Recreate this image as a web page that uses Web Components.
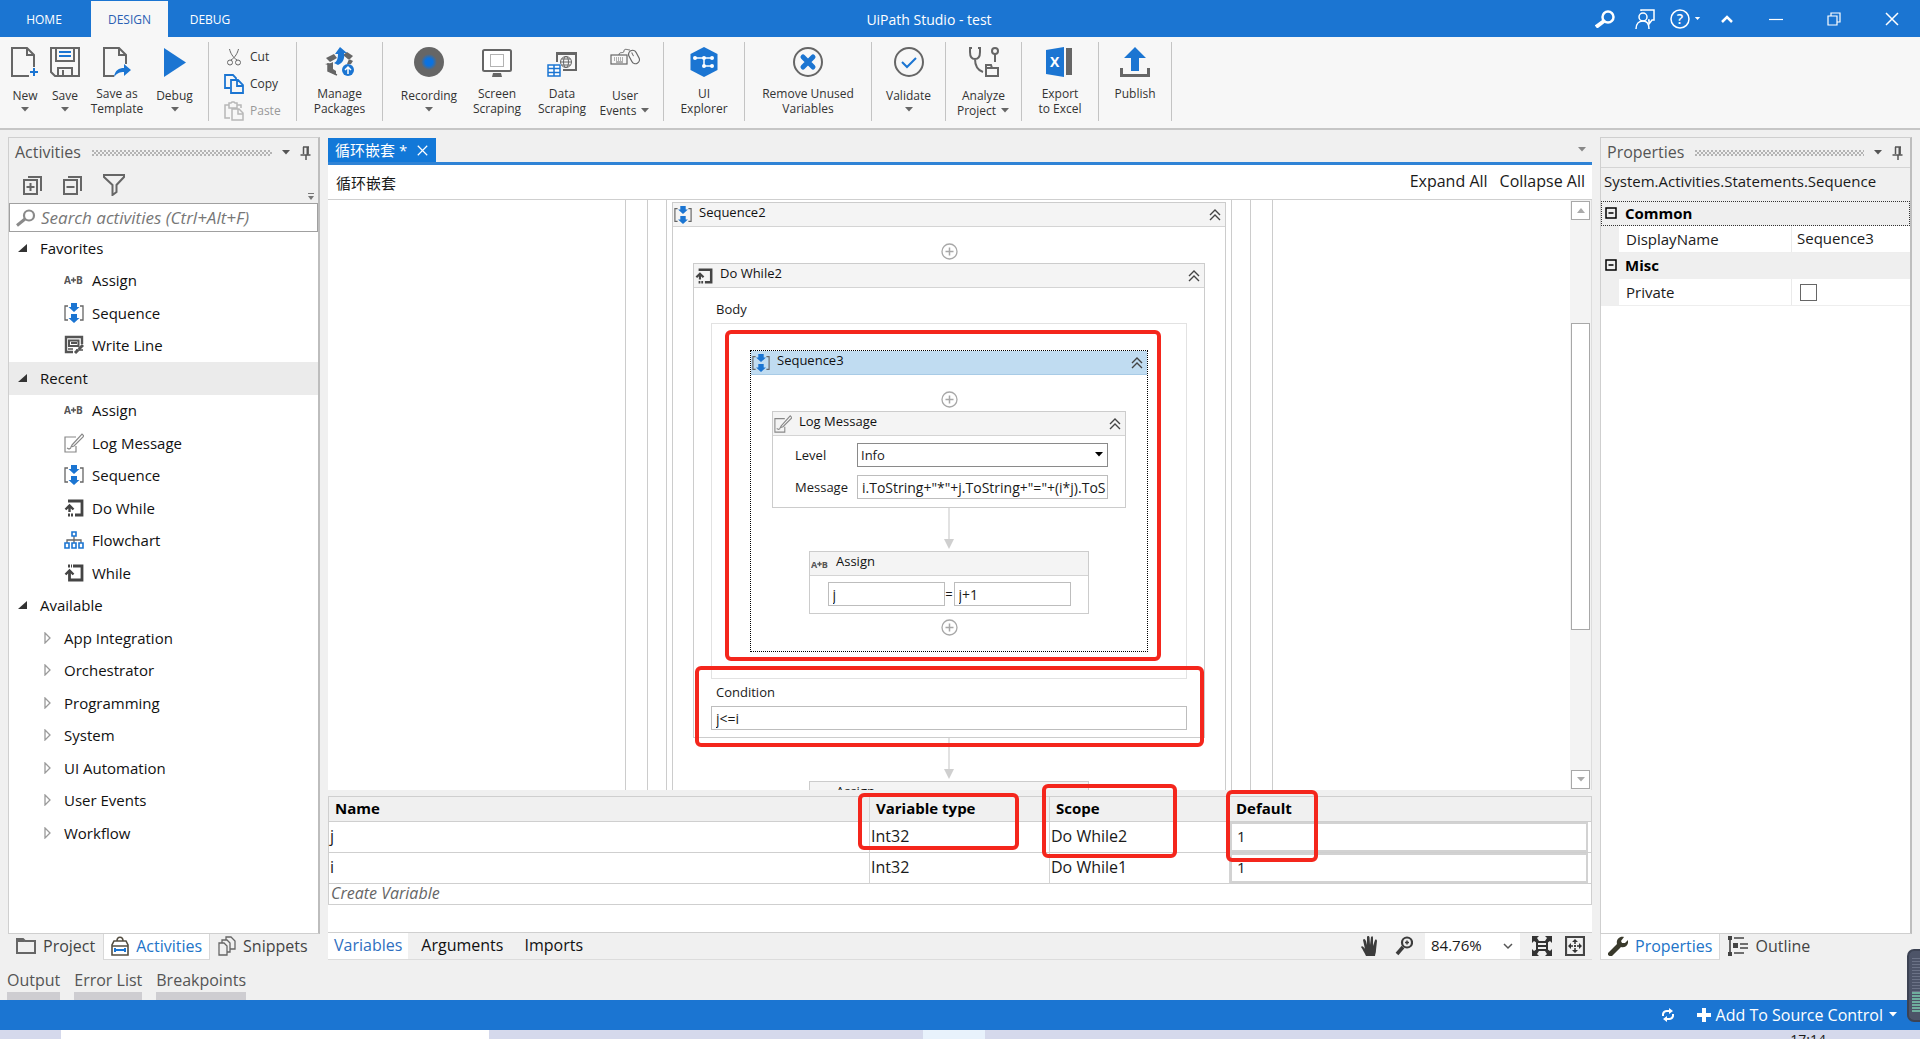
<!DOCTYPE html>
<html lang="en">
<head>
<meta charset="utf-8">
<title>UiPath Studio - test</title>
<style>
  html, body { margin: 0; height: 100%; }
  body {
    --blue: #1b75d2;
    --line: #cfcfcf;
    --panel: #f0f0f0;
    font: 15px/20px "Open Sans", "Noto Sans", "Noto Sans CJK SC", sans-serif;
    color: #1a1a1a;
    background: var(--panel);
    overflow: hidden;
  }
</style>
</head>
<body>
<studio-app></studio-app>
<script>
const BASE = `
  *, *::before, *::after { box-sizing: border-box; }
  button, input, select { font: inherit; color: inherit; margin: 0; border-radius: 0; }
  button { background: none; border: 0; padding: 0; }
  :host { box-sizing: border-box; }
`;
function define(name, render) {
  customElements.define(name, class extends HTMLElement {
    constructor() { super(); this.attachShadow({ mode: 'open' }); }
    connectedCallback() {
      if (this.shadowRoot.childNodes.length) return;
      const t = document.createElement('template');
      t.innerHTML = '<style>' + BASE + '</style>' + render(k => this.getAttribute(k) || '', this);
      this.shadowRoot.append(t.content.cloneNode(true));
    }
  });
}

/* ---------- icons: [width, height, markup] ---------- */
const G = '#666', B = '#1b75d2';
const s = (c, w, d, extra = '') => `<path d="${d}" fill="none" stroke="${c}" stroke-width="${w}" ${extra}/>`;
const f = (c, d) => `<path d="${d}" fill="${c}"/>`;
const ICONS = {
  new: [28, 30, s(G, 2, 'M23 20V8L16 1H1v28h17M16 1v7h7') + s(B, 2, 'M23 21v8M19 25h8')],
  save: [30, 30, s(G, 2, 'M1 1h28v28H5l-4-4zM6 1v13h18V1M8 29v-8h14v8M13 23v6') + s(B, 2, 'M9 5h12M9 9h12')],
  saveas: [28, 30, s(G, 2, 'M23 17V8L16 1H1v28h10M16 1v7h7') + f(B, 'M11 30c1-7 5-9 10-9v-4l7 6l-7 6v-4c-4 0-7 1-10 5z')],
  debug: [22, 30, f(B, 'M0 1l22 14.500L0 30z')],
  cut: [14, 18, s(G, 1, 'M2.500 1c1 4 3 8 7.500 11M11.500 1c-1 4-3 8-7.500 11') + `<circle cx="3" cy="14.500" r="2.500" fill="none" stroke="${G}"/><circle cx="11" cy="14.500" r="2.500" fill="none" stroke="${G}"/>`],
  copy: [20, 20, s(B, 1.8, 'M6 14H1V1h8l3 3v2M7 6h7l5 5v8H7zM13 6v6h6')],
  paste: [20, 20, s('#b8b8b8', 1.5, 'M6 17H1V4h4V2h2l1-1h2l1 1h2v2h4v3M5 4v3h8V4M8 8h7l4 4v7H8zM14 8v5h5')],
  packages: [30, 30, f(G, 'M1 11l8-4l3 4l-7 4zM28 9l-6-4l-4 3l6 5zM0 17l6-1l2-1v7l3 2v4L3 24v-6zM24 12l4 2l-2 3h-4z') + s(G, 1.5, 'M3 16v8l9 4') + f(B, 'M9 16c3-1 4-5 4-9h-3l5-7l7 6h-3c1 5-1 10-6 12z') + `<circle cx="23" cy="23" r="6" fill="${B}"/>` + s('#fff', 1.5, 'M23 27v-7M20 23l3-3l3 3')],
  record: [30, 30, `<defs><radialGradient id="r"><stop offset=".45" stop-color="#0b72e0"/><stop offset="1" stop-color="${G}"/></radialGradient></defs><circle cx="15" cy="15" r="15" fill="${G}"/><circle cx="15" cy="15" r="8" fill="url(#r)"/>`],
  screen: [30, 30, `<rect x="1" y="3" width="28" height="21" rx="1.500" fill="#fff" stroke="${G}" stroke-width="2"/><rect x="8.500" y="7.500" width="13" height="12" fill="none" stroke="${G}" stroke-dasharray="1 1"/>` + f(G, 'M11 26h8l1 4H10z')],
  data: [30, 30, s(G, 2, 'M10 15V6h19v17H16M10 7h19') + `<circle cx="19" cy="15" r="5.500" fill="none" stroke="${G}"/><ellipse cx="19" cy="15" rx="2.500" ry="5.500" fill="none" stroke="${G}"/>` + s(G, 1, 'M13.500 15h11M14.500 12h9M14.500 18h9') + `<rect x="0" y="17" width="14" height="12" fill="#fff"/>` + s(B, 1.5, 'M1 18h12v11H1zM1 21.500h12M1 25.500h12M7 18v11')],
  events: [30, 30, `<rect x="1" y="8" width="16" height="9" fill="none" stroke="${G}" stroke-width="1.200"/>` + s(G, 1, 'M4 11h10M4 13h10', 'stroke-dasharray="1 1"') + s(G, 1, 'M6 15h7M9 8c0-4 5-1 5-4s4-1 6-1') + `<g transform="rotate(-28 24 10)"><rect x="20" y="3" width="8" height="14" rx="4" fill="none" stroke="${G}" stroke-width="1.200"/>` + s(G, 1, 'M24 5v4') + '</g>'],
  explorer: [30, 30, f(B, 'M15 0l13.500 7v16L15 30L1.500 23V7z') + s('#fff', 1.5, 'M6 11h17M15 11v8h8') + [[6, 11], [15, 11], [23, 11], [15, 19], [23, 19]].map(p => `<circle cx="${p[0]}" cy="${p[1]}" r="2" fill="#fff"/>`).join('')],
  remove: [30, 30, `<circle cx="15" cy="15" r="14" fill="none" stroke="${G}" stroke-width="2"/>` + s(B, 5, 'M10 10l10 10M20 10L10 20', 'stroke-linecap="round"')],
  validate: [30, 30, `<circle cx="15" cy="15" r="14" fill="none" stroke="${G}" stroke-width="2"/>` + s(B, 2, 'M8 15l5 5l9-9')],
  analyze: [30, 30, s(G, 2, 'M3 1H1v4c0 5 2 7 5 7s5-2 5-7V1H9M6 12c0 7 2 11 8 13') + `<circle cx="26" cy="4" r="3" fill="none" stroke="${G}" stroke-width="2"/>` + s(G, 2, 'M26 7v8M17 29V18h5l1 3h6v8zM17 21h7')],
  excel: [28, 30, f(G, 'M20 1h6v27h-6z') + f(B, 'M0 3l18-3v30L0 27z') + `<text x="4" y="20" font-size="14" font-weight="700" fill="#fff">X</text>`],
  publish: [30, 30, f(B, 'M15 0l11 11h-7v13h-8V11H4z') + s(G, 3, 'M1.500 21v7.500h27V21')],
  caret: [10, 6, f('currentColor', 'M1 0h8L5 4.500z')],
  up: [10, 6, f('currentColor', 'M1 5h8L5 0z')],
  pin: [12, 14, s('#555', 1.5, 'M3 1h6M3.500 1v7M8 1v7M0.500 9h10M6 9v5') + f('#555', 'M6.500 1h2v8h-2z')],
  plusbox: [20, 20, s(G, 2, 'M1 5h13v14H1zM5 2h13v14M7.500 8v8M3.500 12h8')],
  minusbox: [20, 20, s(G, 2, 'M1 5h13v14H1zM5 2h13v14M3.500 12h8')],
  filter: [22, 22, s(G, 2, 'M1 1h20v2l-7.500 8v7l-4 3V11L1 3z')],
  overflow: [6, 8, f('#777', 'M0 0h6v1H0zM0 3h6L3 7z')],
  search: [20, 18, `<circle cx="13" cy="6.500" r="5" fill="none" stroke="#8a8a8a" stroke-width="2.200"/>` + s('#8a8a8a', 3, 'M9 10l-8 6.500')],
  tsearch: [20, 18, `<circle cx="13" cy="7" r="5.500" fill="none" stroke="#fff" stroke-width="2.500"/>` + s('#fff', 4, 'M9 11l-8 6')],
  feedback: [20, 20, s('#fff', 1.5, 'M6 2V1h13v10h-2l-3 4v-4h-1') + `<circle cx="8" cy="8" r="4" fill="none" stroke="#fff" stroke-width="1.500"/>` + s('#fff', 1.5, 'M1 20c0-5 3-8 7-8s6 3 6 8')],
  help: [20, 20, `<circle cx="10" cy="10" r="9" fill="none" stroke="#fff" stroke-width="1.500"/><text x="10" y="15" text-anchor="middle" font-size="14" font-weight="600" fill="#fff">?</text>`],
  chevup: [12, 8, s('#fff', 2.5, 'M1 7l5-5l5 5')],
  min: [14, 14, s('#fff', 1.2, 'M0 7.500h14')],
  max: [14, 14, s('#fff', 1.2, 'M1 4h9v9H1zM4 4V1h9v9h-3')],
  close: [14, 14, s('currentColor', 1.5, 'M1 1l12 12M13 1L1 13')],
  assign: [20, 20, `<text x="0" y="14" font-size="10" font-weight="700" fill="#555">A</text><text x="12" y="14" font-size="10" font-weight="700" fill="#555">B</text>` + s('#555', 1.5, 'M7 10h5M9.500 7.500v5')],
  sequence: [20, 20, s(G, 1.3, 'M4 3H1v14h3M16 3h3v14h-3') + f(B, 'M7 0h6v4h2.500L10 9L4.500 4H7zM7 11h6v4h2.500L10 20l-5.500-5H7z')],
  writeline: [20, 20, s('#555', 2.4, 'M9 17H2V2h16v7') + s('#555', 2, 'M5 5.500h9.500v5.500H5zM7 8h6') + s('#555', 3, 'M19 10l-8 8', 'stroke-dasharray="6 1"') + s('#555', 1.5, 'M12 15h7M4 14h5')],
  log: [20, 20, s('#888', 1.2, 'M12 4H1v15h11v-6M3 15l2 1l2-1') + s('#888', 1.2, 'M8 12L18 1l2 2L10 13l-3 1z')],
  dowhile: [20, 20, s('#444', 2.8, 'M4 3h14v14h-7') + s('#444', 2.8, 'M4 17h5', 'stroke-dasharray="2 1"') + s('#444', 2.4, 'M5.500 14V8M1.500 11.500L5.500 7.500L9.500 11.500')],
  while: [20, 20, s('#444', 2.8, 'M9 3h9v14H5.500V8') + s('#444', 2.8, 'M4 3h4', 'stroke-dasharray="2 1"') + s('#444', 2.4, 'M1.500 11.500L5.500 7.500L9.500 11.500')],
  flow: [20, 20, s(G, 1.3, 'M10 6v4M3 13v-3h14v3M10 10v3') + s(B, 1.6, 'M8 2h4v4H8zM1 13h4v5H1zM8 13h4v5H8zM15 13h4v5h-4z')],
  folder: [20, 16, s(G, 2, 'M1 15V1h6l2 2h10v12z') + f(G, 'M1 1h6l2 3H1z')],
  bag: [18, 20, s('#554f42', 1.6, 'M1 19V9l2-4h12l2 4v10zM6 5c0-5 6-5 6 0M1 10h16') + s(B, 2, 'M4 14h10M4 12v4M14 12v4')],
  snippets: [18, 20, s(G, 1.3, 'M1 7h5l3 3v9H1zM4 7V4h5l3 3v9H9M8 4V1h5l4 4v8h-5')],
  wrench: [20, 20, f('#3a3a2c', 'M0 17L9 8c-1-4 2-8 7-7l-3 4l1 2l3 0l3-3c1 5-3 8-7 7l-9 9c-2 1-5-1-4-3z')],
  outline: [20, 20, f('#444', 'M0 0h4v4H0zM5 7h5v5H5zM0 16h4v4H0z') + s('#444', 1.6, 'M6 2h10M2 4v14M12 8h8M12 12h8M6 17h10')],
  hand: [18, 20, f('#3c3c3c', 'M5 20C3 16 2 14 0 11c1-2 3 0 4 2L2 4c1-2 2-1 3 1l1 4V1c1-2 2-1 2.500 0L9 9l1-8c1-1 2-1 2 1v8l2-6c1-1 2 0 2 1l-1 9c0 3-1 4-1 6z')],
  mag: [18, 20, `<circle cx="12" cy="6.500" r="5" fill="none" stroke="#3c3c3c" stroke-width="2.200"/>` + s('#3c3c3c', 3.6, 'M8 11l-6 7') + s('#3c3c3c', 1.5, 'M10 6.500h4M12 4.500v4')],
  fit: [20, 20, s('#333', 2, 'M5 6h10v8H5zM5 10h10') + f('#333', 'M0 0h7L5 2l2 3l-2 2l-3-2l-2 2zM20 0h-7l2 2l-2 3l2 2l3-2l2 2zM0 20h7l-2-2l2-3l-2-2l-3 2l-2-2zM20 20h-7l2-2l-2-3l2-2l3 2l2-2z')],
  overview: [20, 20, s('#444', 2.2, 'M1 1h18v18H1z') + f('#333', 'M10 3l3 3H7zM10 17l3-3H7zM3 10l3-3v6zM17 10l-3-3v6z') + s('#333', 1.5, 'M10 6v8M6 10h8', 'stroke-dasharray="2 1"')],
  chevdown: [10, 8, s('#555', 1.5, 'M1 2l4 4l4-4')],
  collapse: [12, 12, s('#444', 1.4, 'M1 6l5-5l5 5M1 11l5-5l5 5')],
  plus: [17, 17, `<circle cx="8.500" cy="8.500" r="7.500" fill="#fff" stroke="#a8a8a8" stroke-width="1.300"/>` + s('#a8a8a8', 1.5, 'M8.500 4.500v8M4.500 8.500h8')],
  arrow: [12, 42, s('#cfcfcf', 1.2, 'M6 0v32') + f('#cfcfcf', 'M1 31h10L6 41z')],
  open: [10, 10, f('#333', 'M9 1v8H0z')],
  closed: [8, 12, s('#9a9a9a', 1.3, 'M1 1l5 5l-5 5z')],
  refresh: [14, 14, s('#fff', 2, 'M2 8V6a4 4 0 0 1 4-3h3M12 6v2a4 4 0 0 1-4 3H5') + f('#fff', 'M8 0l4 3l-4 3zM6 14l-4-3l4-3z')],
  add: [14, 14, s('#fff', 4, 'M7 0v14M0 7h14')],
  minus: [12, 12, s('#000', 1.5, 'M1 1h10v10H1zM3.500 6h5')],
};
define('ui-icon', a => {
  const [w, h, m] = ICONS[a('name')];
  const k = +a('size') / h || 1;
  return `<style>:host{display:inline-flex;flex:none}svg{display:block;font-family:"Open Sans",sans-serif}</style>
  <svg width="${Math.round(w * k)}" height="${Math.round(h * k)}" viewBox="0 0 ${w} ${h}" aria-hidden="true">${m}</svg>`;
});

define('red-mark', () => `<style>:host{display:block;position:absolute;z-index:5;border:4px solid #f4261c;border-radius:6px;pointer-events:none}</style>`);

/* ---------- title bar ---------- */
define('title-bar', () => `<style>
  :host { display: grid; grid-template-columns: 1fr auto 1fr; height: 37px; flex: none; background: var(--blue); color: #fff; align-items: center; }
  nav { display: flex; height: 37px; padding-top: 1px; font-size: 12px; }
  nav button { width: 84px; padding-top: 2px; }
  nav button:first-child { width: 91px; padding-right: 3px; }
  nav .on { width: 77px; background: #f7f7f7; color: #2b5fb4; }
  h1 { font-size: 14px; font-weight: 400; margin: 0; padding: 2px 62px 0 0; }
  .r { display: flex; justify-content: flex-end; align-items: center; padding-right: 21px; }
  .r button { display: flex; align-items: center; gap: 4px; }
</style>
<nav><button>HOME</button><button class="on">DESIGN</button><button>DEBUG</button></nav>
<h1>UiPath Studio - test</h1>
<div class="r">
  <button aria-label="Search" style="margin-right:20px"><ui-icon name="tsearch"></ui-icon></button>
  <button aria-label="Feedback" style="margin-right:15px"><ui-icon name="feedback"></ui-icon></button>
  <button aria-label="Help" style="margin-right:20px"><ui-icon name="help"></ui-icon><ui-icon name="caret" size="4"></ui-icon></button>
  <button aria-label="Collapse ribbon" style="margin-right:36px"><ui-icon name="chevup"></ui-icon></button>
  <button aria-label="Minimize" style="margin-right:44px"><ui-icon name="min"></ui-icon></button>
  <button aria-label="Restore" style="margin-right:44px"><ui-icon name="max"></ui-icon></button>
  <button aria-label="Close"><ui-icon name="close"></ui-icon></button>
</div>`);

/* ---------- ribbon ---------- */
define('ribbon-item', a => {
  const lines = a('label').split('|'), menu = a('menu');
  const inline = menu && lines.length > 1;
  const caret = '<ui-icon name="caret"></ui-icon>';
  return `<style>
  :host { display: flex; flex: none; justify-content: center; }
  button { display: flex; flex-direction: column; align-items: center; width: 100%; font-size: 12px; line-height: 15px; color: #333; white-space: nowrap; }
  .t { margin-top: ${menu ? 11 : 9}px; display: flex; flex-direction: column; align-items: center; }
  .t span { display: flex; align-items: center; gap: 4px; }
  .c { margin-top: 4px; }
  ui-icon { color: #666; }
  </style>
  <button><ui-icon name="${a('icon')}"></ui-icon><span class="t">${lines.map((l, i) => `<span>${l}${inline && i ? caret : ''}</span>`).join('')}</span>${menu && !inline ? `<ui-icon class="c" name="caret"></ui-icon>` : ''}</button>`;
});
define('ribbon-bar', () => {
  const it = (w, icon, label, menu = '') => `<ribbon-item style="width:${w}px" icon="${icon}" label="${label}" menu="${menu}"></ribbon-item>`;
  return `<style>
  :host { display: flex; height: 93px; flex: none; background: #f7f7f7; border-bottom: 2px solid #c6c6c6; padding: 10px 5px 0; }
  i { width: 1px; height: 79px; margin-top: -5px; background: #c4c4c4; flex: none; }
  .edit { display: flex; flex-direction: column; gap: 7px; width: 72px; margin-left: 15px; }
  .edit button { display: flex; align-items: center; gap: 6px; height: 20px; font-size: 12px; color: #333; }
  .edit button:last-child { color: #999; }
  .edit span { width: 20px; display: flex; justify-content: center; }
  .g { width: 8px; flex: none; }
  .h { width: 10px; flex: none; }
  </style>
  ${it(40, 'new', 'New', 1)}${it(40, 'save', 'Save', 1)}${it(64, 'saveas', 'Save as|Template')}${it(51, 'debug', 'Debug', 1)}
  <span class="g"></span><i></i>
  <div class="edit"><button><span><ui-icon name="cut"></ui-icon></span>Cut</button><button><span><ui-icon name="copy"></ui-icon></span>Copy</button><button><span><ui-icon name="paste"></ui-icon></span>Paste</button></div>
  <i></i>${it(85, 'packages', 'Manage|Packages')}<i></i><span class="h"></span>
  ${it(72, 'record', 'Recording', 1)}${it(64, 'screen', 'Screen|Scraping')}${it(66, 'data', 'Data|Scraping')}${it(60, 'events', 'User|Events', 1)}
  <span class="g"></span><i></i>${it(80, 'explorer', 'UI|Explorer')}<i></i>${it(126, 'remove', 'Remove Unused|Variables')}<i></i>${it(73, 'validate', 'Validate', 1)}<i></i>${it(75, 'analyze', 'Analyze|Project', 1)}<i></i>${it(76, 'excel', 'Export|to Excel')}<i></i>${it(72, 'publish', 'Publish')}<i></i>`;
});

/* ---------- docked panels ---------- */
define('dock-panel', a => `<style>
  :host { display: flex; flex-direction: column; min-width: 0; }
  section { flex: 1; min-height: 0; display: flex; flex-direction: column; border: 1px solid var(--line); border-right: 2px solid #bdbdbd; }
  header { display: flex; align-items: center; height: 29px; flex: none; padding: 0 6px 0 6px; color: #555; }
  h2 { font-size: 16px; font-weight: 400; margin: 0 11px 0 0; padding-bottom: 2px; }
  .grip { flex: 1; height: 6px; background: radial-gradient(circle at 1px 1px, #b4b4b4 1px, transparent 1px) 0 0 / 4px 4px, radial-gradient(circle at 1px 1px, #b4b4b4 1px, transparent 1px) 2px 2px / 4px 4px; }
  button { margin-left: 9px; display: flex; }
</style>
<section><header><h2>${a('heading')}</h2><span class="grip"></span><button aria-label="Options"><ui-icon name="caret"></ui-icon></button><button aria-label="Pin"><ui-icon name="pin"></ui-icon></button></header><slot></slot></section>
<slot name="tabs"></slot>`);

define('dock-tab', a => `<style>
  :host { display: block; }
  button { display: flex; align-items: center; gap: 7px; height: 26px; padding: 0 7px 2px; color: #444; font-size: 16px; border: 1px solid transparent; border-top: 0; }
  :host([on]) button { background: #fff; color: #2274c8; border-color: #d8d8d8; }
</style><button><ui-icon name="${a('icon')}"></ui-icon><slot></slot></button>`);

define('tree-row', a => {
  const k = a('kind'), pad = { group: 19, leaf: 65, branch: 45 }[k];
  const icon = { group: 'open', branch: 'closed' }[k] || a('icon');
  return `<style>
  :host { display: flex; align-items: center; padding: 0 0 2px ${pad - 10}px; height: 32px; color: #111; }
  :host(:nth-child(odd)) { height: 33px; }
  :host([sel]) { background: #ebebeb; }
  ui-icon { margin-right: ${{ group: 12, leaf: 8, branch: 12 }[k]}px; }
  </style><ui-icon name="${icon}"></ui-icon><slot></slot>`;
});

define('activities-panel', () => {
  const g = (l, x = '') => `<tree-row kind="group" ${x}>${l}</tree-row>`;
  const l = (i, t) => `<tree-row kind="leaf" icon="${i}">${t}</tree-row>`;
  return `<style>
  :host { display: grid; min-height: 0; }
  .tools { display: flex; align-items: center; gap: 20px; height: 36px; padding: 0 4px 0 14px; }
  .tools button { display: flex; }
  .tools button:last-child { margin-left: auto; margin-top: 24px; }
  .search { display: flex; align-items: center; height: 29px; gap: 5px; padding-left: 6px; background: #fff; border: 1px solid #a0a0a0; }
  .search input { flex: 1; min-width: 0; border: 0; outline: 0; padding: 0; font-size: 17px; font-style: italic; background: none; }
  .search input::placeholder { color: #777; }
  .tree { flex: 1; min-height: 0; overflow: hidden; background: #fff; }
  .tabs { display: flex; }
  </style>
  <dock-panel heading="Activities">
    <div class="tools"><button aria-label="Expand"><ui-icon name="plusbox"></ui-icon></button><button aria-label="Collapse"><ui-icon name="minusbox"></ui-icon></button><button aria-label="Filter"><ui-icon name="filter"></ui-icon></button><button aria-label="More"><ui-icon name="overflow"></ui-icon></button></div>
    <label class="search"><ui-icon name="search"></ui-icon><input type="text" aria-label="Search activities" placeholder="Search activities (Ctrl+Alt+F)"></label>
    <div class="tree">${g('Favorites')}${l('assign', 'Assign')}${l('sequence', 'Sequence')}${l('writeline', 'Write Line')}
    ${g('Recent', 'sel')}${l('assign', 'Assign')}${l('log', 'Log Message')}${l('sequence', 'Sequence')}${l('dowhile', 'Do While')}${l('flow', 'Flowchart')}${l('while', 'While')}
    ${g('Available')}${['App Integration', 'Orchestrator', 'Programming', 'System', 'UI Automation', 'User Events', 'Workflow'].map(t => `<tree-row kind="branch">${t}</tree-row>`).join('')}</div>
    <div class="tabs" slot="tabs"><dock-tab icon="folder">Project</dock-tab><dock-tab icon="bag" on>Activities</dock-tab><dock-tab icon="snippets">Snippets</dock-tab></div>
  </dock-panel>`;
});

define('properties-panel', () => `<style>
  :host { display: grid; min-height: 0; }
  .type { height: 34px; line-height: 27px; padding-left: 3px; border-top: 1px solid #d4d4d4; }
  .grid { flex: 1; background: #fff; padding: 0; }
  .cat { display: flex; align-items: center; gap: 8px; height: 26px; padding: 0 0 2px 4px; margin: 0; background: #efefef; font-size: 15px; font-weight: 700; color: #000; }
  .cat.focus { height: 25px; border: 1px dotted #333; padding-left: 3px; }
  .row { display: grid; grid-template-columns: 173px 1fr; height: 27px; border-left: 18px solid #efefef; border-bottom: 1px solid #eee; align-items: center; }
  .row label { padding-left: 7px; border-right: 1px solid #eaeaea; height: 26px; line-height: 26px; }
  .row input[type=text] { border: 0; outline: 0; padding: 0 0 3px 5px; width: 100%; background: none; }
  .row input[type=checkbox] { appearance: none; width: 17px; height: 17px; border: 1px solid #666; background: #fff; margin-left: 8px; }
  .tabs { display: flex; }
</style>
<dock-panel heading="Properties">
  <div class="type">System.Activities.Statements.Sequence</div>
  <div class="grid">
    <h3 class="cat focus"><ui-icon name="minus"></ui-icon>Common</h3>
    <div class="row"><label for="dn">DisplayName</label><input id="dn" type="text" value="Sequence3"></div>
    <h3 class="cat"><ui-icon name="minus"></ui-icon>Misc</h3>
    <div class="row"><label for="pv">Private</label><input id="pv" type="checkbox"></div>
  </div>
  <div class="tabs" slot="tabs"><dock-tab icon="wrench" on>Properties</dock-tab><dock-tab icon="outline">Outline</dock-tab></div>
</dock-panel>`);

/* ---------- designer ---------- */
define('workflow-card', (a, el) => `<style>
  :host { display: block; position: relative; border: 1px solid #cccccc; background: #fff; margin: 0 auto; }
  :host([selected]) { border: 1px dotted #000; }
  header { display: flex; align-items: center; height: 24px; padding: 0 4px 0 1px; background: #f4f4f4; border-bottom: 1px solid #d4d4d4; color: #111; }
  :host([selected]) header { background: #c0dcf1; border-color: #a8cbe6; }
  header span { padding: 0 0 5px 7px; flex: 1; }
  header button { display: flex; }
</style>
<header><ui-icon name="${a('icon')}" size="18"></ui-icon><span>${a('heading')}</span>${el.hasAttribute('fixed') ? '' : '<button aria-label="Collapse"><ui-icon name="collapse"></ui-icon></button>'}</header><slot></slot>`);

define('add-slot', () => `<style>:host{display:flex;justify-content:center;padding:16px 0 3px}:host([last]){padding:5px 0 15px}button{display:flex}</style><button aria-label="Add activity"><ui-icon name="plus"></ui-icon></button>`);
define('flow-arrow', () => `<style>:host{display:flex;justify-content:center;height:43px}</style><ui-icon name="arrow"></ui-icon>`);

define('assign-card', a => `<style>
  :host { display: block; }
  workflow-card { width: 280px; }
  div { display: flex; justify-content: center; align-items: center; padding: 6px 0 7px; }
  div span { width: 9px; text-align: center; }
  input { width: 117px; height: 24px; border: 1px solid #bdbdbd; padding: 0 4px; outline: 0; font-size: 14px; }
</style>
<workflow-card icon="assign" heading="Assign" fixed><div><input type="text" aria-label="To" value="${a('to')}"><span>=</span><input type="text" aria-label="Value" value="${a('value')}"></div></workflow-card>`);

define('workflow-canvas', () => `<style>
  :host { display: flex; flex: 1; min-height: 0; background: #fff; font-size: 13px; }
  .view { flex: 1; min-width: 0; overflow: hidden; display: flex; justify-content: center; align-items: stretch; }
  .w { border: solid #cccccc; border-width: 0 1px; height: 100%; flex: none; }
  .w1 { width: 648px; padding: 0 21px; } .w2 { padding: 0 18px; } .w3 { padding: 2px 5px 0; }
  .dw { width: 512px; } .next { width: 280px; }
  .body { margin: 0 17px; padding: 0 0 7px; }
  .body .lb { display: block; padding-left: 5px; line-height: 27px; }
  .body .lb:first-child { padding-top: 8px; }
  .drop { border: 1px solid #e2e2e2; padding: 26px 0; }
  .s3 { width: 398px; }
  .lm { width: 354px; }
  .form { display: grid; grid-template-columns: 62px 251px; gap: 8px 0; padding: 7px 0 8px 22px; align-items: center; }
  input, .sel { height: 24px; border: 1px solid #bdbdbd; padding: 0 0 0 4px; outline: 0; background: #fff; width: 100%; font-size: 14px; }
  .cond { position: relative; }
  .sel { display: flex; align-items: center; border-color: #8a8a8a; padding: 0 3px 0 0; font-size: 13px; }
  .sel select { appearance: none; border: 0; background: none; flex: 1; padding: 0 3px; outline: 0; }
  .sb { width: 22px; display: flex; flex-direction: column; background: #f3f3f3; padding: 1px 1px 1px 1px; border-right: 1px solid #ddd; }
  .sb button, .thumb { width: 19px; border: 1px solid #a8a8a8; background: #fff; }
  .sb button { height: 19px; display: flex; align-items: center; justify-content: center; color: #aaa; flex: none; }
  .thumb { flex: 306; }
  .a { flex: 104; } .b { flex: 141; }
</style>
<div class="view"><div class="w w1"><div class="w w2"><div class="w w3">
  <workflow-card icon="sequence" heading="Sequence2">
    <add-slot></add-slot>
    <workflow-card class="dw" icon="dowhile" heading="Do While2">
      <div class="body"><span class="lb">Body</span>
        <div class="drop">
          <workflow-card class="s3" icon="sequence" heading="Sequence3" selected>
            <red-mark style="inset:-21px -14px -10px -26px"></red-mark>
            <add-slot></add-slot>
            <workflow-card class="lm" icon="log" heading="Log Message">
              <div class="form"><label for="lv">Level</label><span class="sel"><select id="lv"><option>Info</option></select><ui-icon name="caret" style="color:#000"></ui-icon></span>
              <label for="ms">Message</label><input id="ms" type="text" value="i.ToString+&quot;*&quot;+j.ToString+&quot;=&quot;+(i*j).ToS"></div>
            </workflow-card>
            <flow-arrow></flow-arrow>
            <assign-card to="j" value="j+1"></assign-card>
            <add-slot last></add-slot>
          </workflow-card>
        </div>
        <div class="cond"><red-mark style="inset:-13px -17px -17px -16px"></red-mark><label class="lb" for="cd" style="padding-top:0">Condition</label><input id="cd" type="text" value="j&lt;=i"></div>
      </div>
    </workflow-card>
    <flow-arrow></flow-arrow>
    <workflow-card class="next" icon="assign" heading="Assign" fixed></workflow-card>
  </workflow-card>
</div></div></div></div>
<div class="sb"><button aria-label="Scroll up"><ui-icon name="up"></ui-icon></button><span class="a"></span><span class="thumb"></span><span class="b"></span><button aria-label="Scroll down"><ui-icon name="caret"></ui-icon></button></div>`);

define('variables-table', () => `<style>
  :host { display: block; height: 142px; flex: none; background: #fff; border-top: 6px solid #f0f0f0; position: relative; }
  table { width: 100%; border-collapse: separate; border-spacing: 0; table-layout: fixed; border: 1px solid var(--line); border-bottom: 0; }
  th, td { text-align: left; padding: 0 0 2px 1px; border-bottom: 1px solid #cfcfcf; border-right: 1px solid #d4d4d4; position: relative; }
  th { height: 25px; background: #f0f0f0; font-weight: 700; padding-left: 6px; color: #000; }
  td { height: 31px; font-size: 16px; }
  th:nth-child(1) { width: 541px; } th:nth-child(2), th:nth-child(3) { width: 180px; }
  th:last-child, td:last-child { border-right: 0; }
  td:last-child { padding: 0; }
  td input { display: block; width: calc(100% - 3px); height: 30px; border: 2px solid #d2d2d2; outline: 0; padding: 0 5px 2px; background: #fff; font-size: 15px; }
  .new td { height: 20px; line-height: 18px; padding: 0 0 2px 2px; font-style: italic; color: #666; }
</style>
<table><thead><tr><th>Name</th><th>Variable type<red-mark style="left:-12px;top:-4px;width:161px;height:57px"></red-mark></th><th>Scope<red-mark style="left:-8px;top:-13px;width:135px;height:74px"></red-mark></th><th>Default<red-mark style="left:-4px;top:-7px;width:92px;height:72px"></red-mark></th></tr></thead>
<tbody><tr><td>j</td><td>Int32</td><td>Do While2</td><td><input type="text" aria-label="Default of j" value="1"></td></tr>
<tr><td>i</td><td>Int32</td><td>Do While1</td><td><input type="text" aria-label="Default of i" value="1"></td></tr>
<tr class="new"><td colspan="4">Create Variable</td></tr></tbody></table>`);

define('designer-pane', () => `<style>
  :host { display: flex; flex-direction: column; min-width: 0; min-height: 0; }
  .tabs { display: flex; justify-content: space-between; align-items: center; height: 28px; padding-top: 1px; border-bottom: 3px solid #2f83d6; flex: none; color: #888; }
  .tab { display: flex; align-items: center; gap: 10px; align-self: stretch; padding: 0 8px 0 7px; background: #1278d8; color: #fff; }
  .tab button { display: flex; }
  .tabs > button { padding-right: 5px; display: flex; }
  .crumb { display: flex; align-items: center; gap: 12px; height: 35px; background: #fff; border-bottom: 1px solid var(--line); padding: 0 7px 0 8px; flex: none; }
  .crumb button { font-size: 16px; padding-bottom: 3px; }
  .crumb span { flex: 1; padding-top: 1px; }
  .foot { display: flex; align-items: stretch; height: 28px; flex: none; border-top: 1px solid var(--line); border-bottom: 1px solid #dcdcdc; }
  .foot > button { padding: 0 8px 2px; color: #111; font-size: 16px; }
  .foot > button.on { background: #fff; color: #2f6fc0; padding: 0 6px 2px; margin-right: 5px; }
  .foot > .ic { display: flex; align-items: center; padding: 0; }
  .zoom { display: flex; align-items: center; background: #fff; width: 95px; padding: 0 7px 0 3px; margin: 0 12px 0 12px; }
  select { appearance: none; border: 0; background: none; outline: 0; flex: 1; padding: 0 3px 2px; min-width: 0; }
</style>
<div class="tabs"><span class="tab">循环嵌套 *<button aria-label="Close tab"><ui-icon name="close" size="11"></ui-icon></button></span><button aria-label="Open tabs"><ui-icon name="caret"></ui-icon></button></div>
<div class="crumb"><span>循环嵌套</span><button>Expand All</button><button>Collapse All</button></div>
<workflow-canvas></workflow-canvas>
<variables-table></variables-table>
<div class="foot"><button class="on">Variables</button><button>Arguments</button><button style="margin-left:5px">Imports</button>
<button class="ic" aria-label="Pan" style="margin-left:auto"><ui-icon name="hand"></ui-icon></button><button class="ic" aria-label="Zoom" style="margin-left:16px"><ui-icon name="mag"></ui-icon></button>
<span class="zoom"><select aria-label="Zoom level"><option>84.76%</option></select><ui-icon name="chevdown"></ui-icon></span>
<button class="ic" aria-label="Fit to screen"><ui-icon name="fit"></ui-icon></button><button class="ic" aria-label="Overview" style="margin:0 7px 0 13px"><ui-icon name="overview"></ui-icon></button></div>`);

/* ---------- bottom bars ---------- */
define('output-strip', () => `<style>
  :host { display: flex; gap: 14px; height: 40px; flex: none; padding-left: 7px; align-items: flex-end; position: relative; }
  button { color: #555; height: 30px; padding-bottom: 2px; border-bottom: 8px solid #cecdd1; font-size: 16px; }
</style><button>Output</button><button>Error List</button><button>Breakpoints</button>`);

define('status-bar', () => `<style>
  :host { display: flex; justify-content: flex-end; align-items: center; height: 30px; flex: none; background: var(--blue); color: #fff; padding-right: 22px; gap: 22px; font-size: 16px; }
  button { display: flex; align-items: center; gap: 5px; }
</style><button aria-label="Sync"><ui-icon name="refresh"></ui-icon></button><button><ui-icon name="add"></ui-icon>Add To Source Control<ui-icon name="caret"></ui-icon></button>`);

define('task-strip', () => `<style>
  :host { display: flex; height: 9px; flex: none; background: #d5d9ec; overflow: hidden; font-size: 14px; line-height: 16px; }
  .s { width: 61px; } .q { width: 428px; background: #fff; } .n { width: 434px; } .t { width: 62px; background: #e8f2fc; }
  time { margin: 2px 94px 0 auto; }
</style><span class="s"></span><span class="q"></span><span class="n"></span><span class="t"></span><time>17:14</time>`);

define('meter-widget', () => `<style>
  :host { position: absolute; right: 0; bottom: 17px; width: 13px; height: 73px; z-index: 6; background: #4d5468; border: 2px solid #3c4253; border-right: 0; border-radius: 7px 0 0 7px; padding: 7px 0 8px 3px; display: flex; flex-direction: column; }
  span { flex: 1; background: repeating-linear-gradient(#6b7286 0 1px, transparent 1px 3px); }
  b { height: 20px; background: repeating-linear-gradient(#6fae9e 0 2px, transparent 2px 3px); }
</style><span></span><b></b>`);

define('studio-app', () => `<style>
  :host { display: flex; flex-direction: column; height: 100vh; overflow: hidden; position: relative; }
  main { flex: 1; min-height: 0; display: grid; grid-template-columns: 312px minmax(0, 1fr) 312px; grid-template-rows: minmax(0, 1fr); gap: 8px; padding: 7px 8px 0; }
</style>
<title-bar></title-bar><ribbon-bar></ribbon-bar>
<main><activities-panel></activities-panel><designer-pane></designer-pane><properties-panel></properties-panel></main>
<output-strip></output-strip><status-bar></status-bar><task-strip></task-strip><meter-widget></meter-widget>`);
</script>
</body>
</html>
